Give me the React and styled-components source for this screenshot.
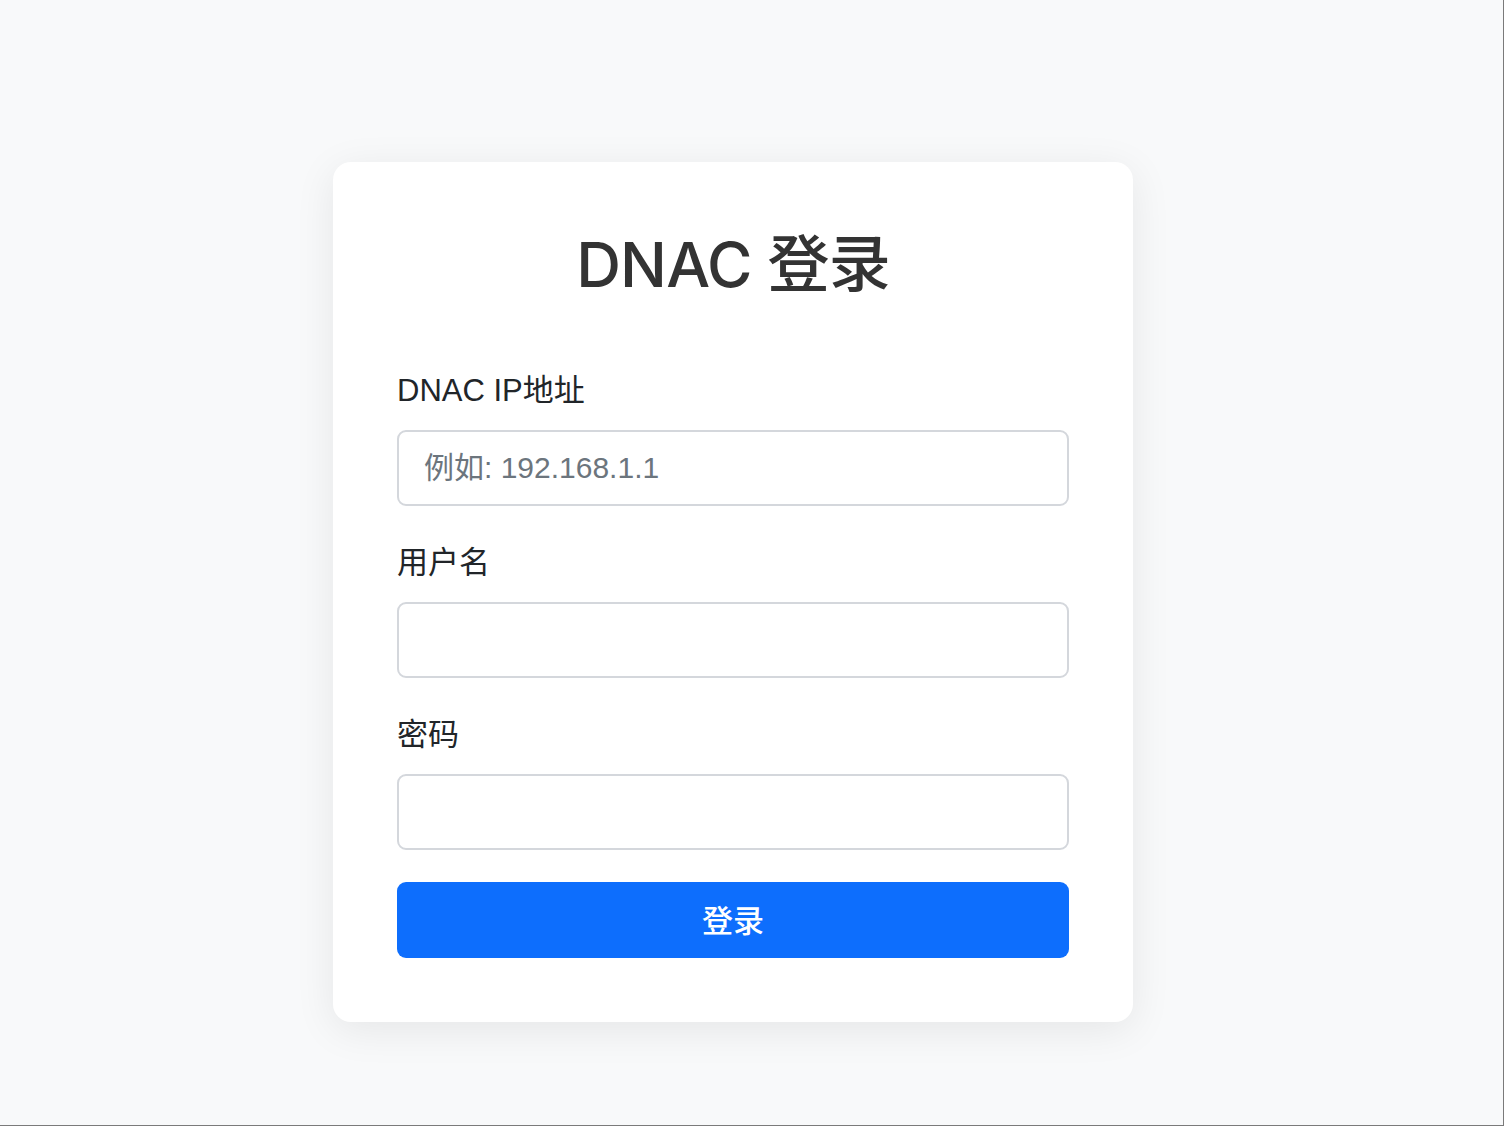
import React, { useState } from "react";
import styled, { createGlobalStyle } from "styled-components";

const GlobalStyle = createGlobalStyle`
  * {
    box-sizing: border-box;
  }

  html,
  body {
    margin: 0;
    padding: 0;
    background: #f8f9fa;
  }

  body {
    font-family: "Liberation Sans", "Noto Sans CJK SC", sans-serif;
    color: #212529;
  }
`;

const Page = styled.main`
  min-height: 100vh;
  height: 1126px;
  display: flex;
  align-items: flex-start;
  padding: 162px 0 0 333px;
  background: #f8f9fa;
  border-right: 1px solid #7a7a7a;
  border-bottom: 1px solid #7a7a7a;
`;

const Card = styled.div`
  width: 800px;
  padding: 64px;
  background: #ffffff;
  border-radius: 18px;
  box-shadow: 0 8px 40px rgba(0, 0, 0, 0.08);
`;

const Title = styled.h2`
  margin: 0 0 66px;
  text-align: center;
  font-family: Inter, "Noto Sans CJK SC", sans-serif;
  font-size: 62px;
  font-weight: 500;
  letter-spacing: -0.8px;
  line-height: 78px;
  color: #333333;
`;

const Field = styled.div`
  margin-bottom: 36px;

  &:last-of-type {
    margin-bottom: 32px;
  }
`;

const Label = styled.label`
  display: block;
  margin-bottom: 18px;
  font-size: 31px;
  line-height: 42px;
  color: #212529;
`;

const Input = styled.input`
  display: block;
  width: 100%;
  height: 76px;
  padding: 0 25px;
  font-family: "Liberation Sans", "Noto Sans CJK SC", sans-serif;
  font-size: 30px;
  color: #212529;
  background: #ffffff;
  border: 2px solid #d4d7dc;
  border-radius: 9px;
  outline: none;

  &::placeholder {
    color: #6c757d;
  }
`;

const Button = styled.button`
  display: block;
  width: 100%;
  height: 76px;
  padding: 0 0 4px;
  font-family: "Noto Sans CJK SC", sans-serif;
  font-size: 31px;
  font-weight: 500;
  color: #ffffff;
  background: #0d6efd;
  border: none;
  border-radius: 9px;
  cursor: pointer;
`;

const fields = [
  { id: "host", label: "DNAC IP地址", type: "text", placeholder: "例如: 192.168.1.1" },
  { id: "username", label: "用户名", type: "text" },
  { id: "password", label: "密码", type: "password" },
];

export default function App() {
  const [form, setForm] = useState({ host: "", username: "", password: "" });

  return (
    <>
      <GlobalStyle />
      <Page>
        <Card>
          <Title>DNAC 登录</Title>
          <form onSubmit={(e) => e.preventDefault()}>
            {fields.map((f) => (
              <Field key={f.id}>
                <Label htmlFor={f.id}>{f.label}</Label>
                <Input
                  id={f.id}
                  type={f.type}
                  placeholder={f.placeholder}
                  value={form[f.id]}
                  onChange={(e) => setForm({ ...form, [f.id]: e.target.value })}
                />
              </Field>
            ))}
            <Button type="submit">登录</Button>
          </form>
        </Card>
      </Page>
    </>
  );
}
